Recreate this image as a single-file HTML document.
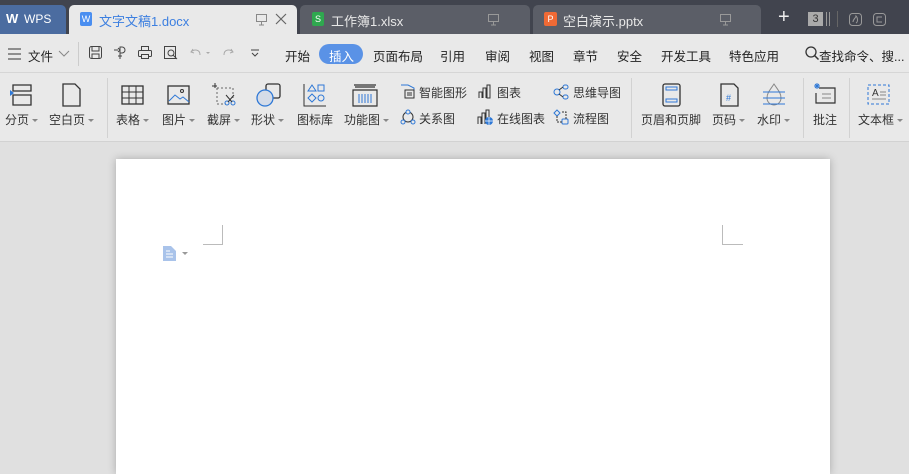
<!DOCTYPE html>
<html style="overflow:hidden;width:909px;height:474px"><head><meta charset="utf-8"><style>
*{margin:0;padding:0;box-sizing:border-box}
body{width:909px;height:474px;overflow:hidden;background:#e0e0e0;font-family:"Liberation Sans","Noto Sans CJK SC",sans-serif;font-size:12px;color:#333;position:relative}
.a{position:absolute;white-space:nowrap}
.tabbar{left:0;top:0;width:909px;height:34px;background:#41444e}
.tab{top:5px;height:29px;border-radius:5px 5px 0 0}
.tb{left:0;top:34px;width:909px;height:39px;background:#e9e9e9;border-bottom:1px solid #d6d6d6}
.rb{left:0;top:73px;width:909px;height:69px;background:#e9e9e9;border-bottom:1px solid #d2d2d2}
.lbl{top:111px;font-size:12px;color:#333}
.sep{top:78px;width:1px;height:60px;background:#d2d2d2}
.menu{top:46px;font-size:12.5px;color:#222}
.ar::after{content:"";display:inline-block;margin-left:3px;vertical-align:middle;border:3px solid transparent;border-top:3px solid #888;border-bottom:0}
svg{position:absolute;overflow:visible}
</style></head><body>
<div class="a tabbar"></div>
<div class="a tab" style="left:0;width:66px;background:#4b6ca0;border-radius:0 5px 0 0"></div>
<div class="a" style="left:6px;top:11px;color:#fff;font-size:13px;font-weight:bold">W</div>
<div class="a" style="left:24px;top:12px;color:#fff;font-size:12px">WPS</div>
<div class="a tab" style="left:69px;width:228px;background:#e9e9e9"></div>
<div class="a" style="left:80px;top:12px;width:12px;height:14px;background:#4a8ef0;border-radius:2px;color:#fff;font-size:9px;text-align:center;line-height:14px">W</div>
<div class="a" style="left:99px;top:11px;color:#3c7fe0;font-size:13px">文字文稿1.docx</div>
<svg style="left:256px;top:14px" width="12" height="12"><rect x="0.5" y="0.5" width="10" height="7" fill="none" stroke="#888"/><path d="M5.5 8v3M3 11h5" stroke="#888"/></svg>
<svg style="left:276px;top:14px" width="11" height="11"><path d="M0 0L10 10M10 0L0 10" stroke="#666" stroke-width="1.2"/></svg>
<div class="a tab" style="left:300px;width:230px;background:#5b5e67"></div>
<div class="a" style="left:312px;top:12px;width:12px;height:14px;background:#2fa84f;border-radius:2px;color:#fff;font-size:9px;text-align:center;line-height:14px">S</div>
<div class="a" style="left:331px;top:11px;color:#e8e8e8;font-size:13px">工作簿1.xlsx</div>
<svg style="left:488px;top:14px" width="12" height="12"><rect x="0.5" y="0.5" width="10" height="7" fill="none" stroke="#999"/><path d="M5.5 8v3M3 11h5" stroke="#999"/></svg>
<div class="a tab" style="left:533px;width:228px;background:#5b5e67"></div>
<div class="a" style="left:544px;top:12px;width:13px;height:14px;background:#f06a35;border-radius:2px;color:#fff;font-size:9px;text-align:center;line-height:14px">P</div>
<div class="a" style="left:563px;top:11px;color:#e8e8e8;font-size:13px">空白演示.pptx</div>
<svg style="left:720px;top:14px" width="12" height="12"><rect x="0.5" y="0.5" width="10" height="7" fill="none" stroke="#999"/><path d="M5.5 8v3M3 11h5" stroke="#999"/></svg>
<div class="a" style="left:778px;top:6px;color:#eee;font-size:20px">+</div>
<div class="a" style="left:808px;top:12px;width:15px;height:14px;background:#aaa;color:#333;font-size:11px;text-align:center;line-height:14px">3</div>
<div class="a" style="left:826px;top:12px;width:4px;height:14px;border-left:1px solid #999;border-right:1px solid #999"></div>
<div class="a" style="left:837px;top:11px;width:1px;height:16px;background:#666"></div>
<svg style="left:849px;top:13px" width="14" height="14"><rect x="0.5" y="0.5" width="12" height="12" rx="3" fill="none" stroke="#999"/><path d="M4 9c0-3 3-4 3-6 2 2 2 6 0 7" fill="none" stroke="#999"/></svg>
<svg style="left:873px;top:13px" width="14" height="14"><rect x="0.5" y="0.5" width="12" height="12" rx="3" fill="none" stroke="#999"/><path d="M9 4H4v5h5" fill="none" stroke="#999"/></svg>

<div class="a tb"></div>
<svg style="left:8px;top:48px" width="14" height="12"><path d="M0 1h13M0 6h13M0 11h13" stroke="#333"/></svg>
<div class="a menu" style="left:28px">文件</div>
<svg style="left:59px;top:51px" width="10" height="6"><path d="M0 0l5 5 5-5" fill="none" stroke="#888"/></svg>
<div class="a" style="left:78px;top:42px;width:1px;height:24px;background:#ccc"></div>
<svg style="left:89px;top:46px" width="14" height="14"><rect x="0.5" y="0.5" width="12" height="12" rx="2" fill="none" stroke="#444"/><path d="M3 1v4h7V1M3 12V8h7v4" fill="none" stroke="#444"/></svg>
<svg style="left:113px;top:46px" width="14" height="14"><path d="M1 4h4M5 2l2 2-2 2M7 1h2a3 3 0 010 6H7zM7 7v6M5 10h4" fill="none" stroke="#444"/></svg>
<svg style="left:138px;top:46px" width="15" height="14"><rect x="0.5" y="4.5" width="13" height="6" rx="1" fill="none" stroke="#444"/><rect x="3.5" y="0.5" width="7" height="4" fill="none" stroke="#444"/><rect x="3.5" y="8.5" width="7" height="4" fill="#e9e9e9" stroke="#444"/></svg>
<svg style="left:164px;top:46px" width="15" height="14"><rect x="0.5" y="0.5" width="11" height="12" fill="none" stroke="#444"/><circle cx="7" cy="7" r="3" fill="none" stroke="#444"/><path d="M9 9l4 4" stroke="#444"/></svg>
<svg style="left:190px;top:47px" width="22" height="12"><path d="M3 2L1 5l3 1M1 5c3-3 9-3 9 3" fill="none" stroke="#aaa"/><path d="M16 5l2 2 2-2" fill="#aaa"/></svg>
<svg style="left:222px;top:47px" width="12" height="12"><path d="M9 2l2 3-3 1M11 5C8 2 2 2 2 8" fill="none" stroke="#aaa"/></svg>
<svg style="left:251px;top:50px" width="9" height="7"><path d="M0 0h8M1 3l3 3 3-3" fill="none" stroke="#444"/></svg>
<div class="a menu" style="left:285px">开始</div>
<div class="a" style="left:319px;top:44px;width:44px;height:20px;border-radius:10px;background:#5a92e6"></div>
<div class="a menu" style="left:329px;color:#fff">插入</div>
<div class="a menu" style="left:373px">页面布局</div>
<div class="a menu" style="left:440px">引用</div>
<div class="a menu" style="left:485px">审阅</div>
<div class="a menu" style="left:529px">视图</div>
<div class="a menu" style="left:573px">章节</div>
<div class="a menu" style="left:617px">安全</div>
<div class="a menu" style="left:661px">开发工具</div>
<div class="a menu" style="left:729px">特色应用</div>
<svg style="left:805px;top:46px" width="14" height="14"><circle cx="6" cy="6" r="5" fill="none" stroke="#333" stroke-width="1.3"/><path d="M9.5 9.5l4 4" stroke="#333" stroke-width="1.5"/></svg>
<div class="a menu" style="left:819px">查找命令、搜...</div>

<div class="a rb"></div>
<svg style="left:10px;top:83px" width="24" height="24"><path d="M2 2h18v6H2zM2 12h18v10H2z" fill="none" stroke="#333" stroke-width="1.3" transform="translate(1,0)"/><path d="M0 7l4 3-4 3z" fill="#2e78d6"/></svg>
<svg style="left:62px;top:83px" width="20" height="24"><path d="M1 1h12l5 5v17H1z" fill="none" stroke="#333" stroke-width="1.3"/></svg>
<div class="a lbl" style="left:5px" ><span class="ar">分页</span></div>
<div class="a lbl" style="left:49px"><span class="ar">空白页</span></div>
<div class="a sep" style="left:107px"></div>
<svg style="left:121px;top:85px" width="24" height="20"><rect x="1" y="1" width="21" height="18" fill="none" stroke="#333" stroke-width="1.3"/><path d="M1 7h21M1 13h21M8 1v18M15 1v18" stroke="#333"/></svg>
<svg style="left:167px;top:85px" width="24" height="20"><rect x="1" y="1" width="21" height="18" fill="none" stroke="#333" stroke-width="1.3"/><path d="M2 16l6-6 5 4 3-2 6 5" fill="none" stroke="#2e78d6"/><circle cx="15" cy="6" r="1.5" fill="none" stroke="#333"/></svg>
<svg style="left:212px;top:83px" width="24" height="24"><path d="M5 5h16v10M5 5v16h9" fill="none" stroke="#666" stroke-dasharray="2 2"/><path d="M0 3h5M3 0v5" stroke="#333"/><circle cx="15" cy="20" r="2" fill="none" stroke="#2e78d6"/><circle cx="21" cy="20" r="2" fill="none" stroke="#2e78d6"/><path d="M14 12l6 7M22 12l-6 7" stroke="#333"/></svg>
<svg style="left:256px;top:83px" width="26" height="24"><rect x="10" y="1" width="14" height="14" rx="2" fill="none" stroke="#333" stroke-width="1.3"/><circle cx="9" cy="15" r="8" fill="#d5dce8" stroke="#2e78d6" stroke-width="1.3"/></svg>
<svg style="left:303px;top:83px" width="24" height="24"><path d="M1 1v22h22" fill="none" stroke="#333"/><path d="M9 2l4 6H5z" fill="none" stroke="#2e78d6"/><rect x="15" y="2" width="6" height="6" fill="none" stroke="#2e78d6"/><path d="M9 11l4 4-4 4-4-4z" fill="none" stroke="#2e78d6"/><circle cx="18" cy="15" r="3" fill="none" stroke="#2e78d6"/></svg>
<svg style="left:352px;top:83px" width="26" height="24"><path d="M3 4h20M1 7h24v16H1zM2 2h22" fill="none" stroke="#333" stroke-width="1.2"/><path d="M7 11v9M10 11v9M13 11v9M16 11v9M19 11v9" stroke="#2e78d6"/></svg>
<div class="a lbl" style="left:116px"><span class="ar">表格</span></div>
<div class="a lbl" style="left:162px"><span class="ar">图片</span></div>
<div class="a lbl" style="left:207px"><span class="ar">截屏</span></div>
<div class="a lbl" style="left:251px"><span class="ar">形状</span></div>
<div class="a lbl" style="left:297px">图标库</div>
<div class="a lbl" style="left:344px"><span class="ar">功能图</span></div>
<svg style="left:400px;top:84px" width="16" height="15"><path d="M1 1h7l6 3v3" fill="none" stroke="#2e78d6"/><rect x="5" y="6" width="9" height="8" fill="none" stroke="#333"/><path d="M7 9h5M7 11h5" stroke="#333"/></svg>
<div class="a" style="left:419px;top:84px">智能图形</div>
<svg style="left:400px;top:110px" width="16" height="15"><circle cx="8" cy="7" r="5" fill="none" stroke="#333"/><circle cx="8" cy="2" r="2" fill="#e9e9e9" stroke="#2e78d6"/><circle cx="3" cy="12" r="2" fill="#e9e9e9" stroke="#2e78d6"/><circle cx="13" cy="12" r="2" fill="#e9e9e9" stroke="#2e78d6"/></svg>
<div class="a" style="left:419px;top:110px">关系图</div>
<svg style="left:478px;top:84px" width="14" height="15"><path d="M1 14V8h3v6M5 14V4h3v10M9 14V1h3v13z" fill="none" stroke="#333"/></svg>
<div class="a" style="left:497px;top:84px">图表</div>
<svg style="left:477px;top:109px" width="17" height="16"><path d="M1 15V8h3v7M5 15V4h3v11M9 10V1h3v7" fill="none" stroke="#333"/><circle cx="12" cy="12" r="4" fill="#2e78d6"/><path d="M8 12h8M12 8v8" stroke="#fff" stroke-width=".7"/></svg>
<div class="a" style="left:497px;top:110px">在线图表</div>
<svg style="left:553px;top:84px" width="16" height="16"><circle cx="4" cy="8" r="3" fill="none" stroke="#2e78d6"/><rect x="10" y="1" width="5" height="4" rx="2" fill="none" stroke="#2e78d6"/><rect x="10" y="11" width="5" height="4" rx="2" fill="none" stroke="#2e78d6"/><path d="M6 6l4-3M6 10l4 3" stroke="#333"/></svg>
<div class="a" style="left:573px;top:84px">思维导图</div>
<svg style="left:553px;top:109px" width="16" height="16"><path d="M4 1l3 3-3 3-3-3z" fill="none" stroke="#2e78d6"/><rect x="9" y="10" width="6" height="5" rx="1" fill="none" stroke="#2e78d6"/><path d="M4 7v6h5M9 3h4v7" fill="none" stroke="#333" stroke-dasharray="2 1"/></svg>
<div class="a" style="left:573px;top:110px">流程图</div>
<div class="a sep" style="left:631px"></div>
<svg style="left:662px;top:83px" width="20" height="24"><rect x="1" y="1" width="17" height="22" rx="2" fill="none" stroke="#333" stroke-width="1.3"/><rect x="4" y="4" width="11" height="3" fill="none" stroke="#2e78d6"/><rect x="4" y="16" width="11" height="3" fill="none" stroke="#2e78d6"/></svg>
<svg style="left:720px;top:83px" width="20" height="24"><path d="M1 1h13l4 4v18H1z" fill="none" stroke="#333" stroke-width="1.3"/><text x="6" y="18" font-size="9" fill="#2e78d6" font-family="Liberation Sans">#</text></svg>
<svg style="left:762px;top:83px" width="24" height="24"><path d="M12 1c-4 6-7 9-7 14a7 7 0 0014 0c0-5-3-8-7-14z" fill="none" stroke="#888"/><path d="M1 9h22M1 15h22M1 21h22" stroke="#2e78d6"/></svg>
<div class="a lbl" style="left:641px">页眉和页脚</div>
<div class="a lbl" style="left:712px"><span class="ar">页码</span></div>
<div class="a lbl" style="left:757px"><span class="ar">水印</span></div>
<div class="a sep" style="left:803px"></div>
<svg style="left:813px;top:83px" width="24" height="24"><path d="M6 5h16v15H3V10" fill="none" stroke="#333" stroke-width="1.2"/><path d="M9 11h9M9 15h9" stroke="#888"/><path d="M1 3h6M4 0v6M2 1l4 4M6 1L2 5" stroke="#2e78d6"/></svg>
<div class="a lbl" style="left:813px">批注</div>
<div class="a sep" style="left:849px"></div>
<svg style="left:867px;top:83px" width="24" height="24"><rect x="1" y="2" width="21" height="19" fill="none" stroke="#2e78d6" stroke-dasharray="3 2"/><text x="5" y="13" font-size="10" fill="#333" font-family="Liberation Sans">A</text><path d="M13 9h6M13 12h6M5 16h14" stroke="#888"/></svg>
<div class="a lbl" style="left:858px"><span class="ar">文本框</span></div>

<div class="a" style="left:116px;top:159px;width:714px;height:315px;background:#fff;box-shadow:0 0 8px rgba(0,0,0,.25)"></div>
<div class="a" style="left:222px;top:225px;width:1px;height:20px;background:#bbb"></div>
<div class="a" style="left:203px;top:244px;width:20px;height:1px;background:#bbb"></div>
<div class="a" style="left:722px;top:225px;width:1px;height:20px;background:#bbb"></div>
<div class="a" style="left:722px;top:244px;width:21px;height:1px;background:#bbb"></div>
<svg style="left:163px;top:246px" width="14" height="15"><path d="M0 0h8l5 5v10H0z" fill="#a9c3ea"/><path d="M3 5h4M3 8h7M3 11h7" stroke="#fff"/></svg>
<svg style="left:182px;top:252px" width="6" height="4"><path d="M0 0h6L3 3z" fill="#999"/></svg>
</body></html>
